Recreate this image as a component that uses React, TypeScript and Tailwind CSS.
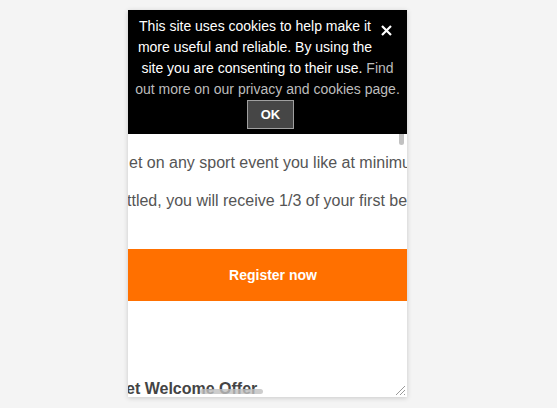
export default function App() {
  return (
    <div className="min-h-[408px] w-full bg-[#f4f4f4] pt-[10px] font-['Liberation_Sans',Arial,sans-serif]">
      <div className="relative ml-[128px] h-[387px] w-[279px] overflow-hidden bg-white shadow-[0_1px_5px_rgba(0,0,0,0.18)]">
        {/* cookie banner */}
        <div className="bg-black px-[4px] pt-[6px] pb-[5px] text-center text-[14px] leading-[21px] text-white">
          <button className="float-right flex h-[40px] w-[25px] items-start justify-start pt-[9px] pl-[3px]">
            <svg width="11" height="11" viewBox="0 0 11 11">
              <path d="M1 1 L10 10 M10 1 L1 10" stroke="#fff" strokeWidth="2.2" strokeLinecap="butt" />
            </svg>
          </button>
          <p>
            This site uses cookies to help make it more useful and reliable. By using the site you are
            consenting to their use. <span className="text-[#bdbdbd]">Find out more on our privacy and cookies page.</span>
          </p>
          <button className="ml-[115px] block h-[29px] w-[47px] border border-[#a0a0a0] bg-[#464646] text-[13px] font-bold text-white">
            OK
          </button>
        </div>

        {/* scrolled page content */}
        <div className="whitespace-nowrap text-[16px] leading-[18px] text-[#555]">
          <p className="mt-[20px] pl-[1px]">et on any sport event you like at minimum odds of 1.50</p>
          <p className="mt-[20px] -ml-[1px]">ttled, you will receive 1/3 of your first bet back</p>
          <div className="mt-[39px] flex h-[52px] items-center justify-center bg-[#ff7000] pl-[11px] text-[14px] font-bold text-white">
            Register now
          </div>
          <h2 className="mt-[79px] -ml-[2px] text-[16px] font-bold text-[#444]">et Welcome Offer</h2>
        </div>

        {/* scrollbars */}
        <div className="absolute top-[124px] right-[3px] h-[11px] w-[5px] rounded-b-full bg-[#c1c1c1]" />
        <div className="absolute bottom-[3px] left-[72px] h-[5px] w-[63px] rounded-full bg-[#c1c1c1]/80" />
        <svg className="absolute right-[1px] bottom-[1px]" width="12" height="12" viewBox="0 0 12 12">
          <path d="M11 2 L2 11 M11 6 L6 11 M11 10 L10 11" stroke="#9a9a9a" strokeWidth="1" />
        </svg>
      </div>
    </div>
  );
}
